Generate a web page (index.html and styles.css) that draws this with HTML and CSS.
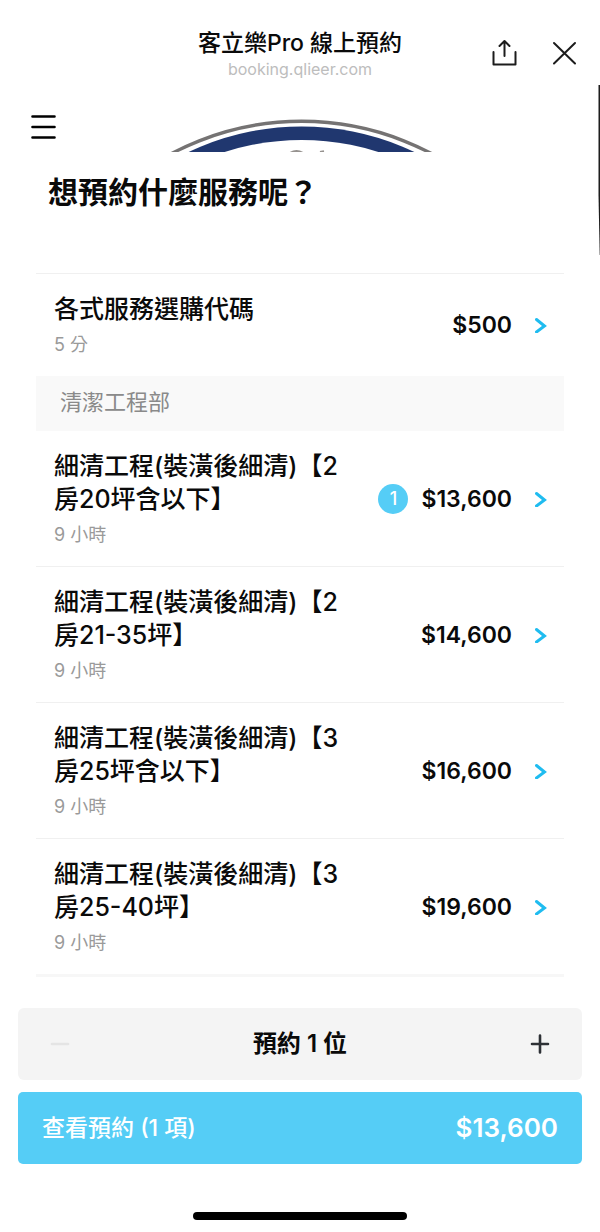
FILE: index.html
```html
<!DOCTYPE html>
<html lang="zh-Hant">
<head>
<meta charset="utf-8">
<meta name="viewport" content="width=device-width, initial-scale=1">
<title>客立樂Pro 線上預約</title>
<link rel="stylesheet" href="styles.css">
</head>
<body>
<header class="browser-bar">
  <div class="page-id">
    <p class="page-title">客立樂Pro 線上預約</p>
    <p class="page-host">booking.qlieer.com</p>
  </div>
  <div class="bar-actions">
    <button class="icon-button" type="button" aria-label="分享">
      <svg width="26" height="28" viewBox="0 0 26 28" fill="none" stroke="#1c1c1c" stroke-width="2" stroke-linecap="round" stroke-linejoin="round"><path d="M1.500 13v12.500h22V13M12.500 17V2.500M7.500 7L12.500 2l5 5"/></svg>
    </button>
    <button class="icon-button" type="button" aria-label="關閉">
      <svg width="26" height="28" viewBox="0 0 26 28" fill="none" stroke="#1c1c1c" stroke-width="2" stroke-linecap="round"><path d="M2 4l21 20.500M23 4L2 24.500"/></svg>
    </button>
  </div>
</header>
<div class="brand-bar">
  <button class="icon-button menu-button" type="button" aria-label="選單">
    <svg width="26" height="26" viewBox="0 0 26 26" stroke="#000" stroke-width="2.600" stroke-linecap="round"><path d="M2.500 2.500h22M2.500 13h22M2.500 23.500h22"/></svg>
  </button>
  <svg class="brand-logo" width="266" height="34" viewBox="0 0 266 34" fill="none" role="img" aria-label="店家標誌">
    <circle cx="134.500" cy="281" r="277.700" stroke="#757373" stroke-width="3.400"/>
    <circle cx="134.500" cy="271" r="262.500" fill="#20376f"/>
    <circle cx="134.500" cy="274" r="252" fill="#fff"/>
    <path d="M123 35q6.500-4 13 0M153 34l4-.800" stroke="#96928f" stroke-width="2"/>
  </svg>
</div>
<main class="content">
  <h1 class="question">想預約什麼服務呢？</h1>
  <ul class="services">
    <li><a class="service" href="#s1">
      <span class="info"><span class="name">各式服務選購代碼</span><span class="duration">5 分</span></span>
      <span class="price">$500</span>
      <svg class="chevron" width="12" height="16" viewBox="0 0 12 16"><path d="M1.500 2.500L9.500 9l-8 6"/></svg>
    </a></li>
  </ul>
  <h2 class="category">清潔工程部</h2>
  <ul class="services grouped">
    <li><a class="service" href="#s2">
      <span class="info"><span class="name">細清工程(裝潢後細清)【2房20坪含以下】</span><span class="duration">9 小時</span></span>
      <span class="count">1</span>
      <span class="price">$13,600</span>
      <svg class="chevron" width="12" height="16" viewBox="0 0 12 16"><path d="M1.500 2.500L9.500 9l-8 6"/></svg>
    </a></li>
    <li><a class="service" href="#s3">
      <span class="info"><span class="name">細清工程(裝潢後細清)【2房21-35坪】</span><span class="duration">9 小時</span></span>
      <span class="price">$14,600</span>
      <svg class="chevron" width="12" height="16" viewBox="0 0 12 16"><path d="M1.500 2.500L9.500 9l-8 6"/></svg>
    </a></li>
    <li><a class="service" href="#s4">
      <span class="info"><span class="name">細清工程(裝潢後細清)【3房25坪含以下】</span><span class="duration">9 小時</span></span>
      <span class="price">$16,600</span>
      <svg class="chevron" width="12" height="16" viewBox="0 0 12 16"><path d="M1.500 2.500L9.500 9l-8 6"/></svg>
    </a></li>
    <li><a class="service" href="#s5">
      <span class="info"><span class="name">細清工程(裝潢後細清)【3房25-40坪】</span><span class="duration">9 小時</span></span>
      <span class="price">$19,600</span>
      <svg class="chevron" width="12" height="16" viewBox="0 0 12 16"><path d="M1.500 2.500L9.500 9l-8 6"/></svg>
    </a></li>
  </ul>
</main>
<footer class="booking">
  <div class="stepper">
    <button class="icon-button" type="button" aria-label="減少" disabled>
      <svg width="20" height="20" viewBox="0 0 20 20" stroke="#e4e4e4" stroke-width="2.600" stroke-linecap="round"><path d="M2 10h16"/></svg>
    </button>
    <output class="people">預約 1 位</output>
    <button class="icon-button" type="button" aria-label="增加">
      <svg width="20" height="20" viewBox="0 0 20 20" stroke="#2d3035" stroke-width="2.600" stroke-linecap="round"><path d="M2 10h16M10 1.500v17"/></svg>
    </button>
  </div>
  <button class="checkout" type="button"><span>查看預約 (1 項)</span><span class="total">$13,600</span></button>
  <div class="home-indicator"></div>
</footer>
<svg class="edge-shadow" width="2" height="170" viewBox="0 0 2 170"><path d="M.500 0H2v170h-.300L.500 110z" fill="#1d1d1d"/></svg>
</body>
</html>
```
FILE: styles.css
```css
* { box-sizing: border-box; }

body {
  margin: 0;
  position: relative;
  background: #fff;
  color: #0a0a0a;
  font-family: Inter, "Noto Sans CJK TC", sans-serif;
}

p, h1, h2, ul { margin: 0; padding: 0; }
ul { list-style: none; }
a { color: inherit; text-decoration: none; }
svg { display: block; }

button {
  border: 0;
  padding: 0;
  background: none;
  color: inherit;
  font: inherit;
}

.icon-button { display: flex; cursor: pointer; }

.browser-bar {
  display: grid;
  grid-template-columns: 1fr auto 1fr;
  align-items: center;
  padding: 27px 22px 24px;
}

.page-id { grid-column: 2; text-align: center; }

.page-title {
  font-size: 23px;
  font-weight: 500;
  line-height: 32px;
}

.page-host {
  color: #bdbdbd;
  font-size: 16px;
  line-height: 20px;
}

.bar-actions {
  display: flex;
  justify-content: flex-end;
  gap: 34px;
}

.brand-bar {
  display: grid;
  grid-template-columns: 1fr auto 1fr;
  align-items: start;
  padding: 11px 30px 0;
}

.brand-logo { margin-top: 4px; }

.content { padding: 18px 36px 0; }

.question {
  padding: 0 12px;
  font-size: 30px;
  font-weight: 600;
  line-height: 44px;
  margin-bottom: 59px;
}

.service {
  display: flex;
  align-items: center;
  border-top: 1px solid #f0f0f0;
  padding: 19px 17px 19px 18px;
}

.grouped li:first-child .service { border-top: 0; }
.grouped { border-bottom: 3px solid #f7f7f7; }

.info { flex: 1; padding-right: 24px; }

.name {
  display: block;
  max-width: 300px;
  font-size: 25px;
  font-weight: 500;
  line-height: 33px;
}

.duration {
  display: block;
  margin-top: 7px;
  color: #9a9a9a;
  font-size: 18px;
  line-height: 24px;
}

.count {
  display: grid;
  place-items: center;
  width: 30px;
  height: 30px;
  margin-right: 13px;
  border-radius: 50%;
  background: #55cdf6;
  color: #fff;
  font-size: 18px;
  font-weight: 500;
}

.price {
  font-size: 23px;
  font-weight: 600;
  line-height: 32px;
}

.chevron {
  margin-left: 23px;
  fill: none;
  stroke: #1fbcf0;
  stroke-width: 3;
  stroke-linecap: round;
}

.category {
  padding: 10px 24px 13px;
  background: #f9f9f9;
  color: #8a8a8a;
  font-size: 22px;
  font-weight: 400;
  line-height: 32px;
}

.booking {
  display: flex;
  flex-direction: column;
  gap: 12px;
  padding: 31px 18px 12px;
}

.stepper {
  display: flex;
  align-items: center;
  justify-content: space-between;
  padding: 18px 32px;
  border-radius: 6px;
  background: #f4f4f4;
}

.people {
  font-size: 24px;
  font-weight: 600;
  line-height: 36px;
}

.checkout {
  display: flex;
  align-items: center;
  justify-content: space-between;
  padding: 18px 24px;
  border-radius: 5px;
  background: #55cdf6;
  color: #fff;
  font-size: 23px;
  font-weight: 500;
  line-height: 36px;
  cursor: pointer;
}

.total { font-size: 26px; font-weight: 600; }

.home-indicator {
  align-self: center;
  width: 38%;
  height: 8px;
  margin-top: 36px;
  border-radius: 4px;
  background: #000;
}

.edge-shadow {
  position: absolute;
  top: 85px;
  right: 0;
}
```
